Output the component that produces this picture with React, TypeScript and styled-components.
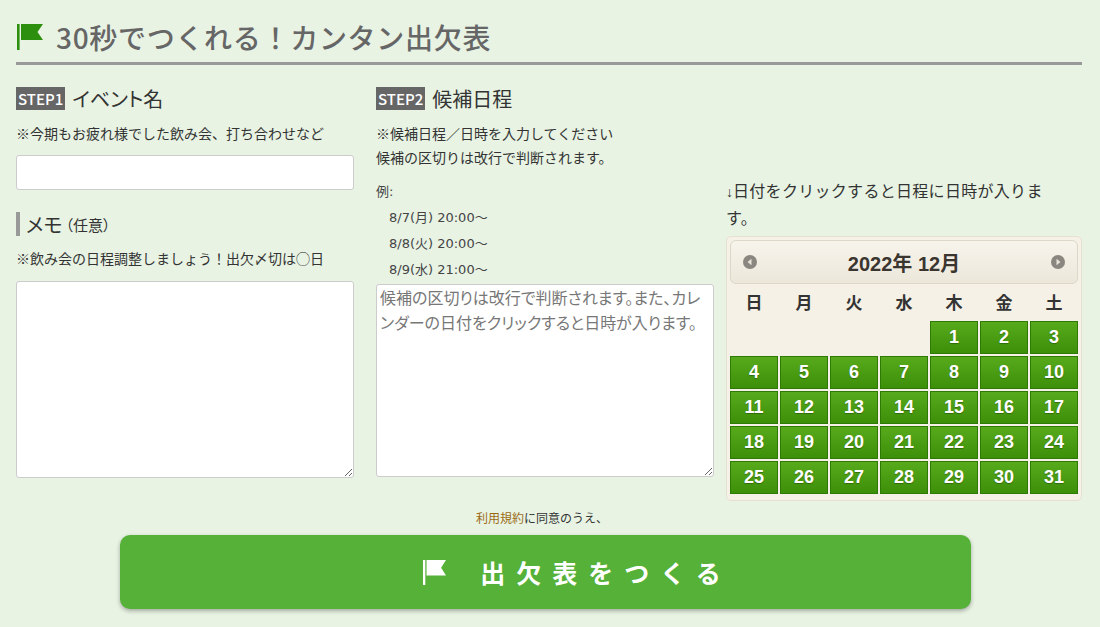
import * as React from 'react';
import styled, { createGlobalStyle } from 'styled-components';

const JP = `"Noto Sans CJK JP", "Noto Sans", sans-serif`;

const GlobalStyle = createGlobalStyle`
	html, body {
		margin: 0;
		padding: 0;
		background: #e8f3e4;
		font-family: ${JP};
		color: #333;
	}
`;

const Page = styled.div`
	width: 1100px;
	height: 627px;
	overflow: hidden;
	box-sizing: border-box;
	padding: 12px 18px 0 16px;
`;
const Title = styled.h1`
	display: flex;
	align-items: center;
	gap: 13px;
	margin: 0;
	height: 53px;
	box-sizing: border-box;
	padding: 0 0 1px 1px;
	border-bottom: 3px solid #999;
	font-size: 28px;
	line-height: 38px;
	font-weight: 500;
	color: #666;
	letter-spacing: 0.7px;
`;
const Columns = styled.div`
	display: flex;
	margin-top: 19px;
`;
const Column = styled.div<{ $width: number; $gap: number }>`
	width: ${p => p.$width}px;
	margin-right: ${p => p.$gap}px;
	flex: none;
`;
const Heading = styled.h2`
	display: flex;
	align-items: center;
	gap: 7px;
	margin: 0;
	height: 28px;
	font-size: 20px;
	font-weight: 400;
	color: #333;
	font-feature-settings: "palt";
`;
const Step = styled.span`
	background: #666;
	color: #fff;
	font-size: 15px;
	line-height: 23px;
	padding: 0 2px;
	font-weight: 500;
`;
const Note = styled.p`
	margin: 9px 0 0;
	font-size: 14px;
	line-height: 24px;
	color: #333;
`;
const MemoNote = styled(Note)`
	margin-top: 10px;
`;
const TextInput = styled.input`
	display: block;
	width: 100%;
	height: 35px;
	box-sizing: border-box;
	margin-top: 10px;
	border: 1px solid #ccc;
	border-radius: 3px;
	background: #fff;
	outline: none;
`;
const MemoHeading = styled.h2`
	display: flex;
	align-items: center;
	margin: 22px 0 0;
	height: 24px;
	padding-left: 6px;
	border-left: 4px solid #999;
	font-size: 20px;
	font-weight: 400;
	color: #333;
	font-feature-settings: "palt";
	small {
		font-size: 15px;
		margin-left: 3px;
	}
`;
const Area = styled.textarea<{ $height: number }>`
	display: block;
	width: 100%;
	height: ${p => p.$height}px;
	box-sizing: border-box;
	border: 1px solid #ccc;
	border-radius: 3px;
	background: #fff;
	padding: 0 3px;
	font-family: ${JP};
	font-size: 16px;
	line-height: 25px;
	font-feature-settings: "palt";
	outline: none;
	&::placeholder {
		color: #777;
		opacity: 1;
	}
`;
const MemoArea = styled(Area)`
	margin-top: 11px;
`;
const ScheduleArea = styled(Area)`
	margin-top: 1px;
`;
const Example = styled.p`
	margin: 10px 0 0;
	font-family: "DejaVu Sans", ${JP};
	font-size: 13px;
	line-height: 26px;
	color: #444;
`;
const ExampleLine = styled.span`
	display: block;
	padding-left: 13px;
`;
const CalendarColumn = styled.div`
	width: 356px;
	flex: none;
	padding-top: 94px;
`;
const CalendarNote = styled.p`
	margin: 0 0 6px;
	width: 330px;
	font-size: 16px;
	line-height: 25px;
	letter-spacing: 0.3px;
	color: #333;
`;
const DownArrow = styled.span`
	font-family: "Liberation Sans", sans-serif;
	font-size: 14px;
	letter-spacing: 0;
`;
const Calendar = styled.div`
	box-sizing: border-box;
	width: 356px;
	height: 265px;
	padding: 3px;
	background: #f5f1e6;
	border: 1px solid #e6e0d0;
	border-radius: 5px;
	font-family: "Liberation Sans", ${JP};
`;
const CalendarHeader = styled.div`
	display: flex;
	align-items: center;
	justify-content: space-between;
	height: 44px;
	box-sizing: border-box;
	padding: 0 12px;
	background: linear-gradient(#f7f4ec, #ece7da);
	border: 1px solid #ddd7c8;
	border-radius: 6px;
	font-size: 20px;
	font-weight: 700;
	color: #3b3530;
`;
const WeekRow = styled.div`
	display: grid;
	grid-template-columns: repeat(7, 50px);
	height: 34px;
	padding-bottom: 3px;
	margin-left: -1px;
	align-items: center;
	text-align: center;
	font-size: 17px;
	font-weight: 700;
	color: #333;
	font-family: ${JP};
`;
const DayGrid = styled.div`
	display: grid;
	grid-template-columns: repeat(7, 48px);
	grid-auto-rows: 33px;
	gap: 2px;
`;
const Day = styled.div<{ $start?: number }>`
	display: flex;
	align-items: center;
	justify-content: center;
	grid-column-start: ${p => p.$start ?? 'auto'};
	background: linear-gradient(#58aa1c, #3c8f08);
	border: 1px solid #2f7a05;
	box-sizing: border-box;
	color: #fff;
	font-size: 18px;
	font-weight: 700;
	text-shadow: 0 1px 1px rgba(0, 0, 0, 0.3);
`;
const Agree = styled.p`
	margin: 6px 0 0;
	padding-right: 14px;
	text-align: center;
	font-size: 12px;
	line-height: 22px;
	color: #333;
	a {
		color: #9a6a14;
		text-decoration: none;
	}
`;
const Submit = styled.button`
	display: flex;
	align-items: center;
	justify-content: center;
	gap: 34px;
	width: 851px;
	height: 74px;
	margin: 6px 0 0 104px;
	padding: 0 0 0 64px;
	border: 0;
	border-radius: 10px;
	background: #55b138;
	box-shadow: 0 2px 4px rgba(0, 0, 0, 0.3);
	color: #fff;
	font-family: ${JP};
	font-size: 25px;
	font-weight: 700;
	letter-spacing: 11px;
`;

const Flag: React.FC<{ $color: string; $w: number; $h: number }> = ({ $color, $w, $h }) => (
	<svg width={$w} height={$h} viewBox="0 0 26 26" preserveAspectRatio="none">
		<rect x="0" y="0" width="2.6" height="26" fill={$color} />
		<path d="M4 0H26L20.5 8L26 16H4Z" fill={$color} />
	</svg>
);

const Arrow: React.FC<{ $right?: boolean }> = ({ $right }) => (
	<svg width="14" height="14" viewBox="0 0 14 14">
		<circle cx="7" cy="7" r="7" fill="#8a8680" />
		<path d={$right ? 'M5.5 3.8L9.5 7L5.5 10.2Z' : 'M8.5 3.8L4.5 7L8.5 10.2Z'} fill="#e8e4da" />
	</svg>
);

const WEEK = ['日', '月', '火', '水', '木', '金', '土'];
const DAYS = Array.from({ length: 31 }, (_, i) => i + 1);

export default function App() {
	return (
		<Page>
			<GlobalStyle />
			<Title>
				<Flag $color="#2d8f0e" $w={26} $h={26} />
				<span>30秒でつくれる！カンタン出欠表</span>
			</Title>
			<Columns>
				<Column $width={338} $gap={22}>
					<Heading><Step>STEP1</Step>イベント名</Heading>
					<Note>※今期もお疲れ様でした飲み会、打ち合わせなど</Note>
					<TextInput type="text" />
					<MemoHeading>メモ<small>（任意）</small></MemoHeading>
					<MemoNote>※飲み会の日程調整しましょう！出欠〆切は◯日</MemoNote>
					<MemoArea $height={197} />
				</Column>
				<Column $width={338} $gap={12}>
					<Heading><Step>STEP2</Step>候補日程</Heading>
					<Note>※候補日程／日時を入力してください<br />候補の区切りは改行で判断されます。</Note>
					<Example>
						例:
						<ExampleLine>8/7(月) 20:00～</ExampleLine>
						<ExampleLine>8/8(火) 20:00～</ExampleLine>
						<ExampleLine>8/9(水) 21:00～</ExampleLine>
					</Example>
					<ScheduleArea $height={193} placeholder="候補の区切りは改行で判断されます。また、カレンダーの日付をクリックすると日時が入ります。" />
				</Column>
				<CalendarColumn>
					<CalendarNote><DownArrow>↓</DownArrow>日付をクリックすると日程に日時が入ります。</CalendarNote>
					<Calendar>
						<CalendarHeader>
							<Arrow />
							<span>2022年 12月</span>
							<Arrow $right />
						</CalendarHeader>
						<WeekRow>
							{WEEK.map(w => <span key={w}>{w}</span>)}
						</WeekRow>
						<DayGrid>
							{DAYS.map(d => (
								<Day key={d} $start={d === 1 ? 5 : undefined}>{d}</Day>
							))}
						</DayGrid>
					</Calendar>
				</CalendarColumn>
			</Columns>
			<Agree><a href="#terms">利用規約</a>に同意のうえ、</Agree>
			<Submit type="button">
				<Flag $color="#fff" $w={23} $h={25} />
				<span>出欠表をつくる</span>
			</Submit>
		</Page>
	);
}
